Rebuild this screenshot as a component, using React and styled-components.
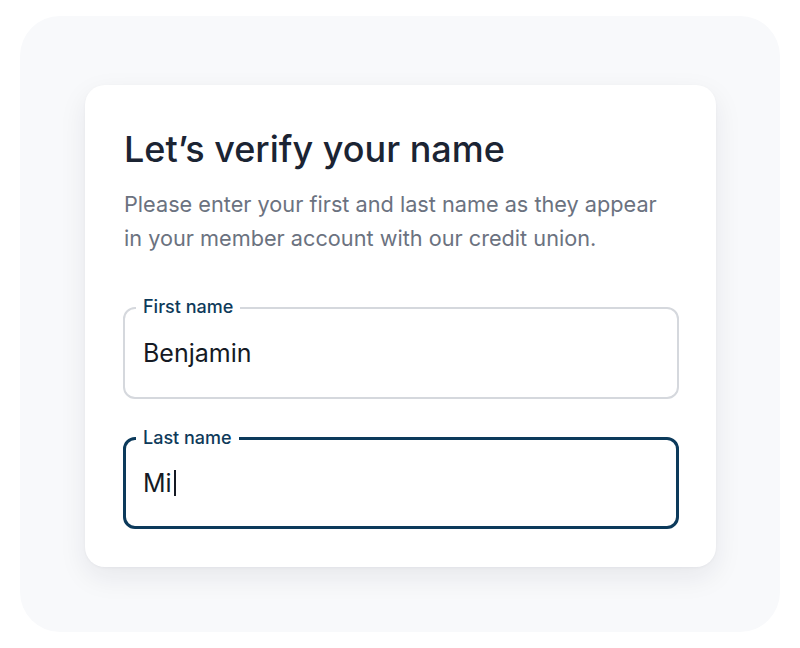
import React from "react";
import styled, { createGlobalStyle } from "styled-components";

const Global = createGlobalStyle`
  html, body { margin: 0; padding: 0; background: #ffffff; }
  body { font-family: "Inter", "Noto Sans", sans-serif; -webkit-font-smoothing: antialiased; }
  * { box-sizing: border-box; }
`;

const Page = styled.div`
  padding: 16px 20px;
  width: 800px;
  height: 648px;
`;

const Panel = styled.div`
  width: 760px;
  height: 616px;
  background: #f8f9fb;
  border-radius: 40px;
  padding: 69px 64px 65px 65px;
`;

const Card = styled.div`
  width: 631px;
  height: 482px;
  background: #ffffff;
  border-radius: 20px;
  box-shadow: 0 10px 28px rgba(20, 30, 50, 0.08), 0 1px 3px rgba(20, 30, 50, 0.04);
  padding: 42px 37px 0 38px;
  display: flex;
  flex-direction: column;
`;

const Title = styled.h1`
  margin: 0 0 0 1px;
  font-size: 36px;
  line-height: 44px;
  font-weight: 500;
  color: #1b2433;
  letter-spacing: 0;
`;

const Lead = styled.p`
  margin: 16px 0 0 1px;
  font-size: 21.7px;
  line-height: 34px;
  color: #6b7280;
  font-weight: 400;
`;

const Fields = styled.div`
  display: flex;
  flex-direction: column;
  gap: 38px;
  margin-top: 52px;
`;

const Field = styled.div`
  position: relative;
  height: 92px;
  border-radius: 12px;
  border: ${(p) => (p.$focused ? "3px solid #0c3a5b" : "2px solid #d5d8dd")};
  display: flex;
  align-items: center;
  padding-left: ${(p) => (p.$focused ? "17px" : "18px")};
`;

const Label = styled.span`
  position: absolute;
  top: -13px;
  left: ${(p) => (p.$focused ? "10px" : "11px")};
  padding: 0 7px;
  background: #ffffff;
  font-size: 18px;
  line-height: 22px;
  font-weight: 500;
  color: #0e3a5a;
`;

const Value = styled.span`
  font-size: 25px;
  line-height: 30px;
  color: #151a24;
  display: inline-flex;
  align-items: center;
`;

const Caret = styled.span`
  display: inline-block;
  width: 2px;
  height: 26px;
  background: #151a24;
  margin-left: 2px;
`;

export default function App() {
  return (
    <>
      <Global />
      <Page>
        <Panel>
          <Card>
            <Title>Let’s verify your name</Title>
            <Lead>
              Please enter your first and last name as they appear
              <br />
              in your member account with our credit union.
            </Lead>
            <Fields>
              <Field>
                <Label>First name</Label>
                <Value>Benjamin</Value>
              </Field>
              <Field $focused>
                <Label $focused>Last name</Label>
                <Value>
                  Mi
                  <Caret />
                </Value>
              </Field>
            </Fields>
          </Card>
        </Panel>
      </Page>
    </>
  );
}
